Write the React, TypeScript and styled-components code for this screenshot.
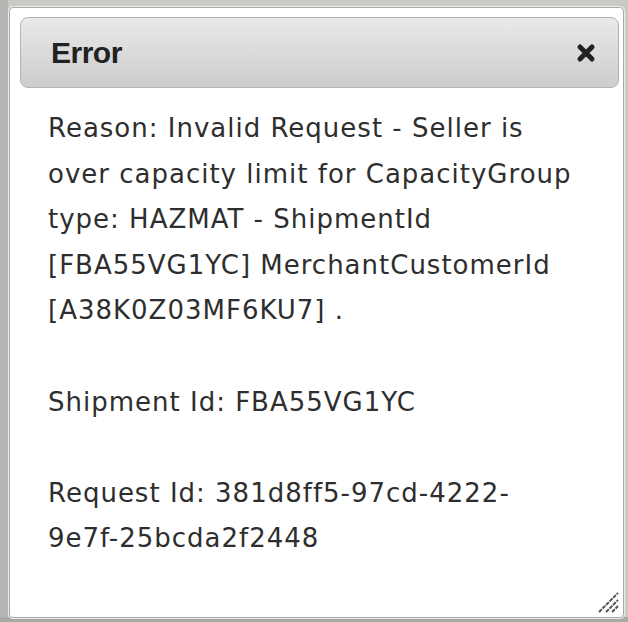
import React from "react";
import styled, { createGlobalStyle } from "styled-components";

const GlobalStyle = createGlobalStyle`
  html, body {
    margin: 0;
    padding: 0;
  }
  body {
    width: 628px;
    height: 622px;
    overflow: hidden;
    background: linear-gradient(to right, #b5b5b1 0, #b5b5b1 8px, #c9c9c5 8px);
  }
`;

const Page = styled.div`
  width: 628px;
  height: 622px;
  box-sizing: border-box;
  padding: 7px 4px 4px 9px;
  display: flex;
  background: linear-gradient(to bottom, transparent 0, transparent 617px, #a8a8a6 617px);
`;

const Dialog = styled.div`
  position: relative;
  flex: 1;
  display: flex;
  flex-direction: column;
  box-sizing: border-box;
  padding: 9px 4px 0 10px;
  background: #fff;
  border: 1px solid #a9a9a9;
  border-radius: 4px;
  box-shadow: 0 0 0 1px #ececec;
`;

const TitleBar = styled.div`
  height: 71px;
  box-sizing: border-box;
  display: flex;
  align-items: center;
  justify-content: space-between;
  padding: 0 20px 0 30px;
  border: 1px solid #b4b4b4;
  border-radius: 8px;
  background: linear-gradient(to bottom, #e9e9e9, #cdcdcd);
`;

const Title = styled.span`
  font-family: "Liberation Sans", Arial, sans-serif;
  font-weight: bold;
  font-size: 30px;
  letter-spacing: -0.5px;
  color: #222;
`;

const CloseButton = styled.button`
  width: 24px;
  height: 24px;
  padding: 0;
  border: none;
  background: none;
  display: flex;
  align-items: center;
  justify-content: center;
  cursor: pointer;
`;

const Content = styled.div`
  flex: 1;
  padding: 18px 44px 0 28px;
  font-family: "DejaVu Sans", Verdana, sans-serif;
  font-size: 26px;
  letter-spacing: 1px;
  line-height: 45.6px;
  color: #2e2e2e;
`;

const Grip = styled.svg`
  position: absolute;
  right: 3px;
  bottom: 3px;
`;

const App = () => {
  return (
    <>
      <GlobalStyle />
      <Page>
        <Dialog>
          <TitleBar>
            <Title>Error</Title>
            <CloseButton aria-label="close">
              <svg width="20" height="20" viewBox="0 0 20 20">
                <path
                  d="M4 4 L16 16 M16 4 L4 16"
                  stroke="#222"
                  strokeWidth="5"
                  strokeLinecap="round"
                />
              </svg>
            </CloseButton>
          </TitleBar>
          <Content>
            Reason: Invalid Request - Seller is over capacity limit for
            CapacityGroup type: HAZMAT - ShipmentId [FBA55VG1YC]
            MerchantCustomerId [A38K0Z03MF6KU7] .
            <br />
            <br />
            Shipment Id: FBA55VG1YC
            <br />
            <br />
            Request Id: 381d8ff5-97cd-4222-9e7f-25bcda2f2448
          </Content>
          <Grip width="24" height="24" viewBox="0 0 24 24">
            <path
              d="M3 22 L22 3 M10 22 L22 10 M16 22 L22 16"
              stroke="#555"
              strokeWidth="2"
              strokeDasharray="4 1"
            />
          </Grip>
        </Dialog>
      </Page>
    </>
  );
};

export default App;
